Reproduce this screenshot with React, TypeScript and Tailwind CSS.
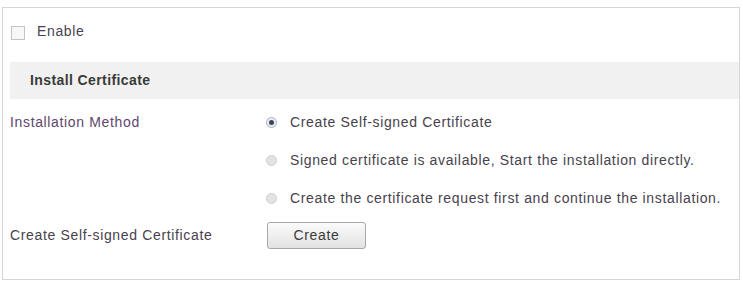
import { useState } from "react";

const options = [
  "Create Self-signed Certificate",
  "Signed certificate is available, Start the installation directly.",
  "Create the certificate request first and continue the installation.",
];

export default function App() {
  const [method, setMethod] = useState(0);

  return (
    <div className="w-[743px] h-[281px] bg-white pt-[7px] pl-[2px] pr-[3px] pb-[1px] font-['Liberation_Sans',Arial,sans-serif] text-[14px] tracking-[0.65px] text-[#47424d]">
      <div className="h-full border border-[#d6d6d6] pl-[7px] flex flex-col">
        <label className="flex items-center h-[47px] gap-[12px] pl-[1px]">
          <span className="w-[14px] h-[14px] mt-[3px] border border-[#c4c4c4] bg-[#f7f7f7]" />
          <span>Enable</span>
        </label>

        <div className="h-[37px] mt-[7px] bg-[#f1f1f1] flex items-center pl-[20px] font-bold tracking-[0.4px] text-[#3a3a3a]">
          Install Certificate
        </div>

        <div className="flex mt-[4px]">
          <div className="w-[256px] h-[38px] flex items-center text-[#60466d]">Installation Method</div>
          <div className="flex flex-col">
            {options.map((o, i) => (
              <button
                key={o}
                onClick={() => setMethod(i)}
                className="h-[38px] flex items-center gap-[13px] text-left"
              >
                <span
                  className={
                    "w-[11px] h-[11px] rounded-full border flex items-center justify-center " +
                    (method === i
                      ? "border-[#a9b3c0] bg-[#e9edf2]"
                      : "border-[#cfcfcf] bg-[#e3e3e3]")
                  }
                >
                  {method === i && <span className="w-[5px] h-[5px] rounded-full bg-[#3c4656]" />}
                </span>
                <span>{o}</span>
              </button>
            ))}
          </div>
        </div>

        <div className="flex items-center h-[36px]">
          <div className="w-[257px]">Create Self-signed Certificate</div>
          <button className="w-[99px] h-[27px] border border-[#a8a8a8] rounded-[3px] bg-gradient-to-b from-[#fbfbfb] to-[#e2e2e2] text-[#3a3a3a]">
            Create
          </button>
        </div>
      </div>
    </div>
  );
}
